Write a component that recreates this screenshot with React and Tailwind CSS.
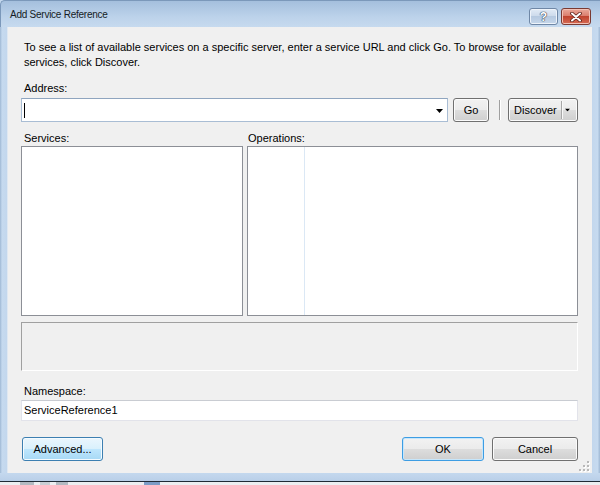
import React from 'react';

const btn =
    "flex items-center justify-center rounded-[3px] border border-[#707070] bg-[linear-gradient(#f2f2f2_0%,#ebebeb_50%,#dddddd_50%,#cfcfcf_100%)] shadow-[inset_0_0_0_1px_#fbfbfb] text-[11px] text-black";

function Triangle({ className }) {
    return (
        <svg width="7" height="4" viewBox="0 0 7 4" className={className}>
            <path d="M0 0H7L3.5 4Z" fill="#000" />
        </svg>
    );
}

function SizeGrip() {
    const dots = [[8, 0], [4, 4], [8, 4], [0, 8], [4, 8], [8, 8]];
    return (
        <svg width="11" height="11" viewBox="0 0 11 11" className="absolute right-[2px] bottom-[1px]">
            {dots.map(([x, y], i) => (
                <g key={i}>
                    <rect x={x + 1} y={y + 1} width="2" height="2" fill="#ffffff" />
                    <rect x={x} y={y} width="2" height="2" fill="#b8b8b8" />
                </g>
            ))}
        </svg>
    );
}

export default function App() {
    return (
        <div className="w-[600px] h-[485px] flex flex-col bg-[#c4d8ee] font-['Liberation_Sans',Arial,sans-serif] text-black overflow-hidden">
            {/* title bar */}
            <div className="h-[27px] flex items-start bg-[linear-gradient(#a4bfdd,#bcd2ea_60%,#c6daef)] border-t border-l border-[#7b98ba] rounded-tl-[5px]">
                <span className="ml-[9px] mt-[8px] text-[10px] leading-[12px] tracking-[-0.25px] text-[#151c24]">Add Service Reference</span>
                <div className="ml-auto mt-[7px] mr-[9px] flex gap-[3px]">
                    <div className="w-[29px] h-[17px] rounded-[3px] border border-[#6f87a6] bg-[linear-gradient(#e2ebf6,#cbd9ea_50%,#b6c9e0_50%,#c6d7eb)] shadow-[inset_0_0_0_1px_#eef3fa] flex items-center justify-center">
                        <span className="text-[12px] leading-[12px] font-bold text-white [text-shadow:0_0_1px_#2f3d50,0_0_1px_#2f3d50,0_0_1px_#2f3d50]">?</span>
                    </div>
                    <div className="w-[30px] h-[17px] rounded-[3px] border border-[#7a3a32] bg-[linear-gradient(#eaa99b,#d97a69_50%,#c0442f_50%,#d66b55)] shadow-[inset_0_0_0_1px_#f2c1b6] flex items-center justify-center">
                        <svg width="12" height="10" viewBox="0 0 12 10">
                            <path d="M2 1.5L10 8.5M10 1.5L2 8.5" stroke="#5a2018" strokeWidth="3.6" strokeLinecap="round" />
                            <path d="M2 1.5L10 8.5M10 1.5L2 8.5" stroke="#ffffff" strokeWidth="2" strokeLinecap="round" />
                        </svg>
                    </div>
                </div>
            </div>

            <div className="flex h-[446px]">
                <div className="w-[7px] bg-[linear-gradient(90deg,#9fb8d4,#c6daef_30%,#c3d7ed)]" />

                {/* client area */}
                <div className="relative flex-1 bg-[#f0f0f0] pl-[13px] pr-[14px] pt-[13px] flex flex-col border-l border-[#dfe8f2]">
                    <p className="pl-[3px] text-[11px] leading-[15px] whitespace-nowrap">
                        To see a list of available services on a specific server, enter a service URL and click Go. To browse for available
                        <br />
                        services, click Discover.
                    </p>

                    <div className="mt-[11px] pl-[3px] text-[11px] leading-[15px]">Address:</div>

                    <div className="mt-[2px] flex items-center h-[24px]">
                        <div className="relative w-[427px] h-[24px] bg-white border border-[#a9bdd4] border-t-[#8fa5bf] flex items-center">
                            <div className="ml-[2px] w-px h-[15px] bg-black" />
                            <Triangle className="absolute right-[4px] top-[10px]" />
                        </div>
                        <div className={`${btn} ml-[5px] w-[36px] h-[24px]`}>Go</div>
                        <div className="ml-[10px] flex h-[20px]">
                            <div className="w-px bg-[#a0a0a0]" />
                            <div className="w-px bg-white" />
                        </div>
                        <div className={`${btn} ml-[7px] w-[70px] h-[24px] !justify-start`}>
                            <span className="pl-[5px] pr-[4px]">Discover</span>
                            <div className="flex h-[18px]">
                                <div className="w-px bg-[#a8a8a8]" />
                                <div className="w-px bg-[#f8f8f8]" />
                            </div>
                            <Triangle className="ml-[1px] scale-75" />
                        </div>
                    </div>

                    <div className="mt-[9px] flex text-[11px] leading-[15px]">
                        <div className="w-[226px] pl-[3px]">Services:</div>
                        <div className="pl-[1px]">Operations:</div>
                    </div>

                    <div className="flex gap-[4px] h-[170px]">
                        <div className="w-[222px] bg-white border border-[#8c8f96]" />
                        <div className="flex-1 bg-white border border-[#8c8f96] flex">
                            <div className="w-[57px] border-r border-[#dbe8f5]" />
                        </div>
                    </div>

                    <div className="mt-[6px] h-[49px] border border-[#a0a0a0] border-r-white border-b-white" />

                    <div className="mt-[13px] pl-[3px] text-[11px] leading-[15px]">Namespace:</div>
                    <div className="mt-[1px] h-[21px] bg-white border border-[#e2e3ea] border-t-[#c9ccd2] flex items-center pl-[2px] text-[11px]">
                        ServiceReference1
                    </div>

                    <div className="mt-[16px] flex items-center">
                        <div className="ml-px w-[81px] h-[24px] flex items-center justify-center rounded-[3px] border border-[#3c7fb1] bg-[linear-gradient(#eaf6fd_0%,#d9f0fc_50%,#bee6fd_50%,#a7d9f5_100%)] shadow-[inset_0_0_0_1px_#f4fbff] text-[11px]">
                            Advanced...
                        </div>
                        <div className={`${btn} ml-auto w-[82px] h-[24px] !border-[#3d9de3] !shadow-[inset_0_0_0_1px_#c6e6fb]`}>OK</div>
                        <div className={`${btn} ml-[8px] w-[86px] h-[24px]`}>Cancel</div>
                    </div>

                    <SizeGrip />
                </div>

                <div className="w-[8px] bg-[linear-gradient(90deg,#c3d7ed,#c6daef_70%,#9fb8d4)]" />
            </div>

            <div className="h-[8px] bg-[linear-gradient(#c4d8ee,#b9cfe8)]" />
            <div className="h-px bg-[#1f2a36]" />
            <div className="flex-1 bg-[#eceef1] flex items-start pl-[20px] gap-[6px]">
                <div className="w-[14px] h-[3px] bg-[#b3bac2]" />
                <div className="w-[10px] h-[3px] bg-[#c8ced4]" />
                <div className="w-[12px] h-[3px] bg-[#b3bac2]" />
                <div className="ml-[70px] w-[16px] h-[3px] bg-[#7b9cc6]" />
            </div>
        </div>
    );
}
